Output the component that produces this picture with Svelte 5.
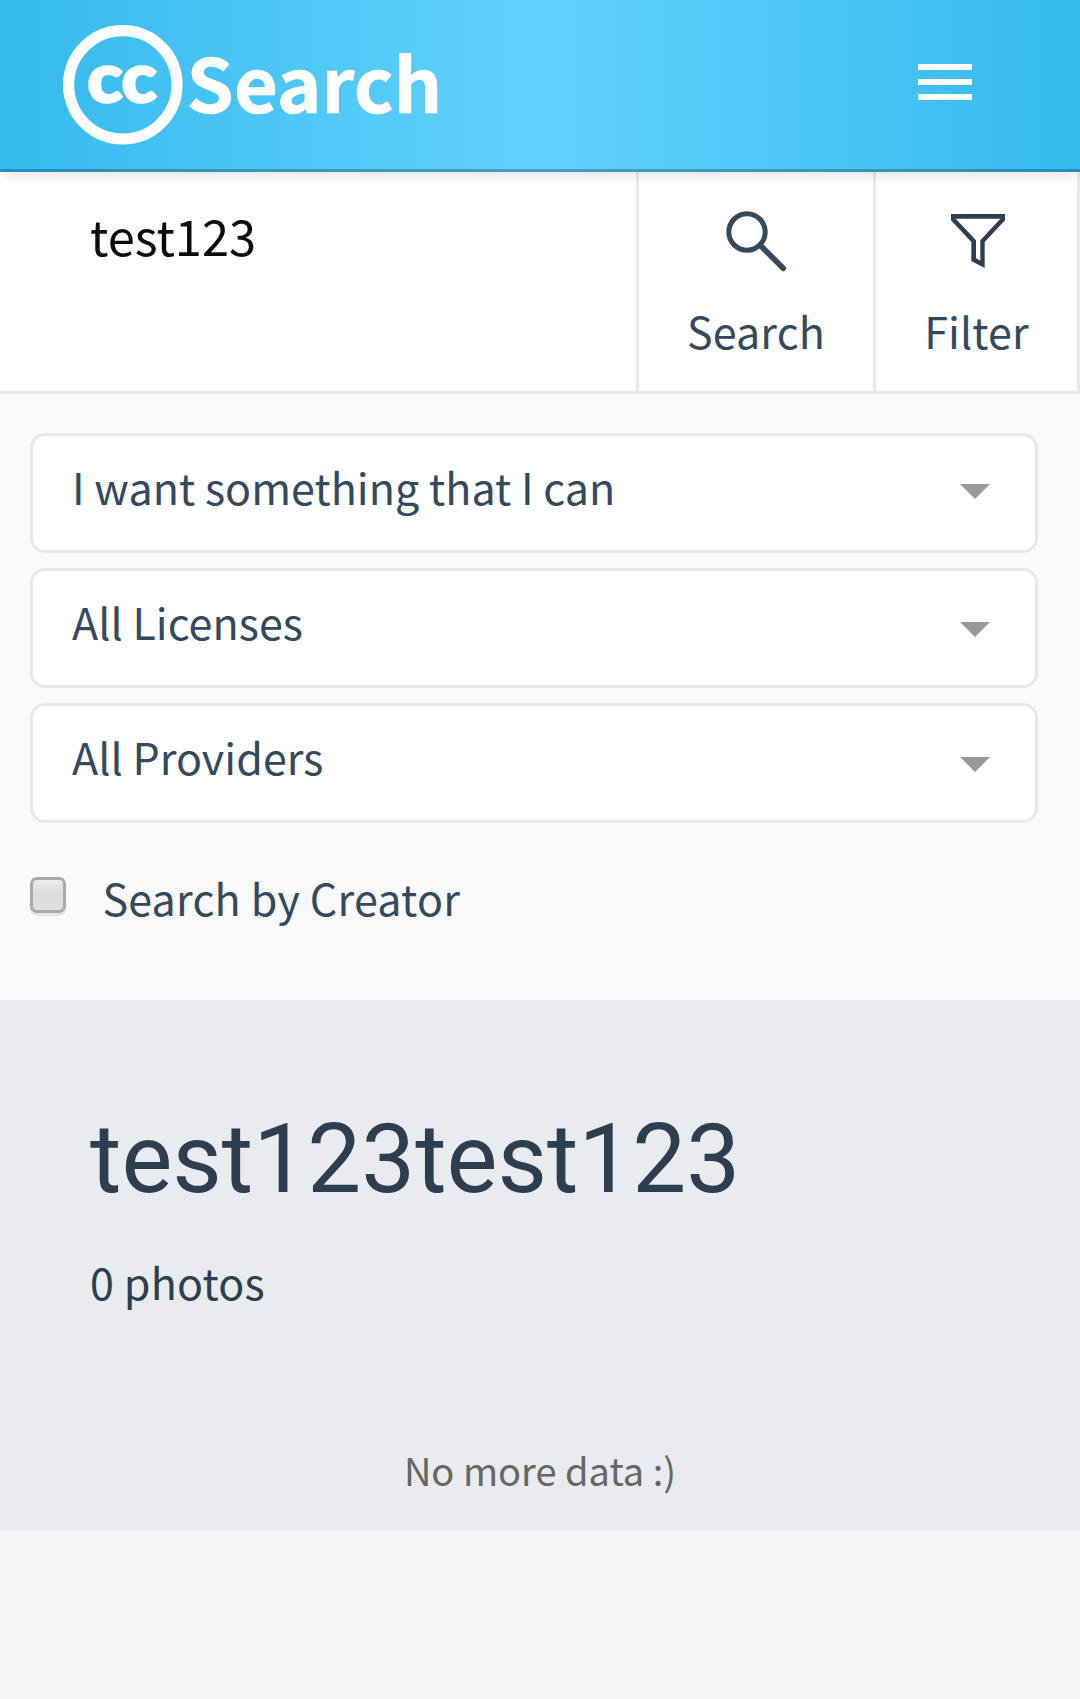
<script>
  let query = $state('test123');
  let byCreator = $state(false);
  const filters = [
    { label: 'I want something that I can', first: true },
    { label: 'All Licenses', first: false },
    { label: 'All Providers', first: false }
  ];
</script>

<div class="page">
  <header class="header">
    <svg class="logo" width="386" height="130" viewBox="60 20 386 130" role="img" aria-label="CC Search">
      <circle cx="122.8" cy="84.8" r="54.2" fill="none" stroke="#fff" stroke-width="11.2" />
      <text class="cc" x="87.6" y="101.8" textLength="69" lengthAdjust="spacingAndGlyphs">cc</text>
      <text class="word" x="186.6" y="112.8" textLength="255.6" lengthAdjust="spacingAndGlyphs">Search</text>
    </svg>
    <button class="menu" aria-label="Menu">
      <span></span><span></span><span></span>
    </button>
  </header>

  <form class="search">
    <input class="query" type="text" bind:value={query} aria-label="Search" />
    <button class="action find" type="button">
      <svg width="61" height="61" viewBox="0 0 61 61" fill="none" stroke="#35495e">
        <circle cx="21" cy="21" r="18.2" stroke-width="5" />
        <path d="M35.5 35.5L57.2 57.2" stroke-width="5.6" stroke-linecap="round" />
      </svg>
      <span>Search</span>
    </button>
    <button class="action filter" type="button">
      <svg width="54" height="54" viewBox="0 0 162 162" fill="#2c3e50" fill-rule="evenodd">
        <path d="M0 0H162V19L101 84V162L61 141V84L0 19ZM14 14L75 79V133L88 140V79L148 14Z" />
      </svg>
      <span>Filter</span>
    </button>
  </form>

  <section class="filters">
    {#each filters as f}
      <div class="select" class:first={f.first}>
        <span>{f.label}</span>
        <svg width="30" height="15" viewBox="0 0 30 15"><path d="M0 0H30L15 15Z" fill="#999" /></svg>
      </div>
    {/each}
    <label class="creator">
      <input type="checkbox" bind:checked={byCreator} />
      <span>Search by Creator</span>
    </label>
  </section>

  <main class="results">
    <h1>test123test123</h1>
    <p class="count">0 photos</p>
    <p class="end">No more data :)</p>
  </main>
</div>

<style>
  :global(body) {
    margin: 0;
    background: #f5f5f5;
  }
  .page {
    width: 1080px;
    height: 1699px;
    overflow: hidden;
    background: #f5f5f5;
    color: #35495e;
    font: 43px 'Noto Sans CJK SC', 'Open Sans', sans-serif;
    letter-spacing: 0.05px;
  }
  .header {
    position: relative;
    box-sizing: border-box;
    height: 172px;
    padding: 20px 108px 0 60px;
    display: flex;
    justify-content: space-between;
    align-items: flex-start;
    background: linear-gradient(to right, #35baec, #62d1ff 50%, #35baec);
    box-shadow: inset 0 -3px rgba(10, 40, 60, 0.3), 0 6px 12px -3px rgba(0, 0, 0, 0.12);
  }
  .logo {
    display: block;
  }
  .logo text {
    font-family: 'Noto Sans CJK SC', sans-serif;
    font-weight: 700;
    fill: #fff;
    letter-spacing: 0;
  }
  .logo .cc {
    font-family: Lato, sans-serif;
    font-size: 68px;
    font-weight: 900;
    stroke: #fff;
    stroke-width: 2.6px;
  }
  .logo .word {
    font-size: 74.2px;
    stroke: #fff;
    stroke-width: 0.7px;
  }
  .menu {
    margin: 44px 0 0;
    padding: 0;
    border: 0;
    background: none;
    width: 54px;
    display: grid;
    gap: 9px;
  }
  .menu span {
    height: 6px;
    background: #fff;
  }
  .search {
    display: grid;
    grid-template-columns: 636px 237px 207px;
    height: 219px;
    border-bottom: 3px solid #e8e8e8;
    background: #fff;
  }
  .query {
    box-sizing: border-box;
    width: 100%;
    height: 124px;
    padding: 0 0 0 90px;
    border: 0;
    outline: 0;
    background: none;
    color: #0a0a0a;
    font: 48.8px 'Noto Sans CJK SC', sans-serif;
  }
  .action {
    display: flex;
    flex-direction: column;
    align-items: center;
    margin: 0;
    padding: 39px 0 0;
    border: 0;
    border-left: 3px solid #e6eaea;
    background: none;
    color: inherit;
    font: inherit;
    letter-spacing: 0.15px;
  }
  .action span {
    line-height: 60px;
    margin-top: 28px;
  }
  .filter {
    padding-top: 42px;
    border-right: 3px solid #e6eaea;
  }
  .filter svg {
    margin-left: 3px;
  }
  .filter span {
    margin-top: 32px;
  }
  .filters {
    box-sizing: border-box;
    height: 606px;
    padding: 39px 42px 0 30px;
    background: #fafafa;
  }
  .select {
    box-sizing: border-box;
    height: 120px;
    margin-bottom: 15px;
    padding: 0 45px 0 39px;
    display: flex;
    justify-content: space-between;
    border: 3px solid #e8e8e8;
    border-radius: 15px;
    background: #fff;
    line-height: 100px;
  }
  .select svg {
    margin-top: 51px;
  }
  .select.first svg {
    margin-top: 48px;
  }
  .creator {
    display: flex;
    margin-top: 54px;
    line-height: 60px;
    letter-spacing: 0.22px;
  }
  .creator input {
    appearance: none;
    box-sizing: border-box;
    width: 36px;
    height: 36px;
    margin: 0 36.4px 0 0;
    border: 3px solid #a9a9a9;
    border-radius: 7px;
    background: linear-gradient(#ededed, #dcdcdc 38%, #dedede);
    box-shadow: 0 3px #e6e6e6;
  }
  .creator span {
    margin-top: -10px;
  }
  .results {
    box-sizing: border-box;
    height: 531px;
    padding: 101px 90px 0;
    background: #e9ebee;
    color: #2c3e50;
  }
  h1 {
    margin: 0;
    font: 400 96px/116px Roboto, sans-serif;
    letter-spacing: 0;
  }
  p {
    margin: 0;
  }
  .count {
    margin-top: 34px;
    line-height: 60px;
    letter-spacing: 0.18px;
  }
  .end {
    margin-top: 129px;
    line-height: 60px;
    font-size: 38px;
    letter-spacing: 0;
    text-align: center;
    color: #666;
  }
</style>
